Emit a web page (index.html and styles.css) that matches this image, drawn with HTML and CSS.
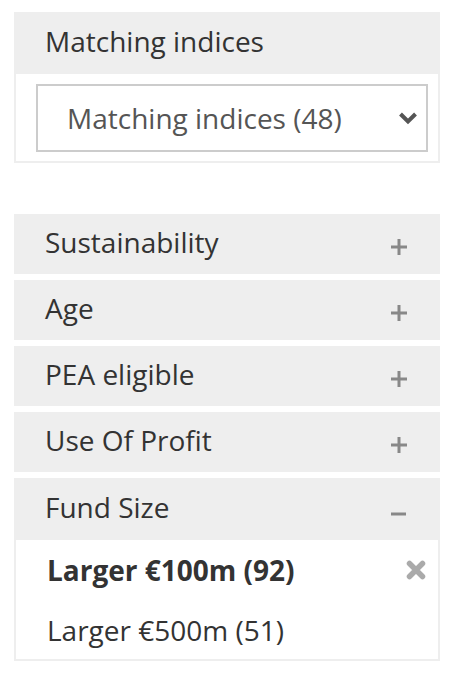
FILE: index.html
```html
<!DOCTYPE html>
<html lang="en">
<head>
<meta charset="utf-8">
<title>Filters</title>
<link rel="stylesheet" href="styles.css">
</head>
<body>
<div class="sidebar">
  <section class="panel">
    <div class="panel-head">Matching indices</div>
    <div class="panel-body">
      <div class="select">
        <span class="select-text">Matching indices (48)</span>
        <svg class="chev" width="20" height="14" viewBox="0 0 20 14"><path d="M2.5 3 L10 10.5 L17.5 3" fill="none" stroke="#555" stroke-width="4"/></svg>
      </div>
    </div>
  </section>

  <div class="accordion">
    <div class="acc-item">
      <div class="acc-head"><span>Sustainability</span><svg class="ico" width="16" height="16" viewBox="0 0 16 16"><path d="M8 0 V16 M0 8 H16" stroke="#888" stroke-width="3"/></svg></div>
    </div>
    <div class="acc-item">
      <div class="acc-head"><span>Age</span><svg class="ico" width="16" height="16" viewBox="0 0 16 16"><path d="M8 0 V16 M0 8 H16" stroke="#888" stroke-width="3"/></svg></div>
    </div>
    <div class="acc-item">
      <div class="acc-head"><span>PEA eligible</span><svg class="ico" width="16" height="16" viewBox="0 0 16 16"><path d="M8 0 V16 M0 8 H16" stroke="#888" stroke-width="3"/></svg></div>
    </div>
    <div class="acc-item">
      <div class="acc-head"><span>Use Of Profit</span><svg class="ico" width="16" height="16" viewBox="0 0 16 16"><path d="M8 0 V16 M0 8 H16" stroke="#888" stroke-width="3"/></svg></div>
    </div>
    <div class="acc-item open">
      <div class="acc-head tall"><span>Fund Size</span><svg class="ico minus" width="16" height="16" viewBox="0 0 16 16"><path d="M0 8 H15" stroke="#888" stroke-width="3"/></svg></div>
      <div class="acc-body">
        <div class="opt active"><span>Larger €100m (92)</span><svg class="x" width="20" height="20" viewBox="0 0 20 20"><path d="M3.5 3.5 L16.5 16.5 M16.5 3.5 L3.5 16.5" stroke="#aaa" stroke-width="5.5" stroke-linecap="round"/></svg></div>
        <div class="opt"><span>Larger €500m (51)</span></div>
      </div>
    </div>
  </div>
</div>
</body>
</html>
```

FILE: styles.css
```css
* { box-sizing: border-box; }

html, body {
  margin: 0;
  padding: 0;
  background: #fff;
}

body {
  font-family: "Open Sans", "Liberation Sans", sans-serif;
  color: #333;
}

.sidebar {
  width: 426px;
  margin: 12px 0 0 14px;
}

.panel-head {
  height: 62px;
  background: #eee;
  font-size: 28px;
  display: flex;
  align-items: center;
  padding: 0 0 4px 31px;
}

.panel-body {
  border: 2px solid #eee;
  border-top: none;
  padding: 10px 10px 9px 20px;
}

.select {
  height: 68px;
  border: 2px solid #ccc;
  display: flex;
  align-items: center;
  justify-content: space-between;
  padding: 0 8px 0 29px;
  font-size: 28px;
  color: #555;
}

.chev { display: block; }

.accordion {
  margin-top: 51px;
  display: flex;
  flex-direction: column;
  gap: 6px;
}

.acc-head {
  height: 60px;
  background: #eee;
  font-size: 28px;
  display: flex;
  align-items: center;
  justify-content: space-between;
  padding: 0 33px 4px 31px;
}

.acc-head.tall { height: 62px; }

.ico { display: block; margin-top: 10px; }
.ico.minus { margin-top: 14px; }

.acc-body {
  border: 2px solid #eee;
  border-top: none;
  padding: 8px 12px 7px 31px;
  display: flex;
  flex-direction: column;
  gap: 16px;
}

.opt {
  height: 44px;
  display: flex;
  align-items: center;
  justify-content: space-between;
  font-size: 28px;
  color: #333;
}

.opt.active { font-weight: 700; }

.x { display: block; }
```
